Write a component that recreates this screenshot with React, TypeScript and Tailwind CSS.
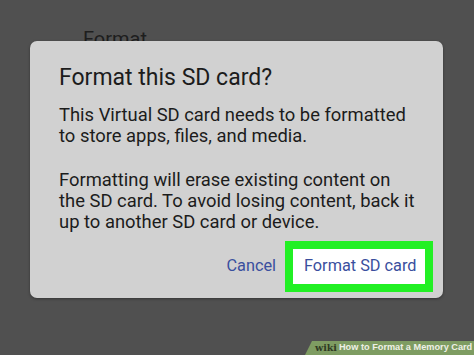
import React from 'react';

export default function App() {
  return (
    <div
      className="relative w-[474px] h-[355px] overflow-hidden bg-[#505050]"
      style={{ fontFamily: 'Roboto, "Liberation Sans", sans-serif' }}
    >
      {/* settings screen dimmed behind the dialog */}
      <div className="pl-[83px] pt-[27px] text-[20px] leading-[24px] text-[#1e1e1e]">Format</div>

      {/* dialog */}
      <div className="absolute left-[30px] top-[41px] w-[413px] h-[257px] rounded-[7px] bg-[#d1d1d1] shadow-[0_1px_3px_rgba(0,0,0,0.35)] flex flex-col">
        <div className="pl-[29px] pr-[10px] pt-[23px] text-[#1c1c1c] whitespace-nowrap">
          <h1 className="text-[23px] leading-[28px] font-normal">Format this SD card?</h1>
          <p className="mt-[12px] text-[18.4px] leading-[21px]">
            This Virtual SD card needs to be formatted
            <br />
            to store apps, files, and media.
          </p>
          <p className="mt-[23px] text-[18.4px] leading-[21px]">
            Formatting will erase existing content on
            <br />
            the SD card. To avoid losing content, back it
            <br />
            up to another SD card or device.
          </p>
        </div>

        <div className="mt-auto mb-[6px] mr-[10px] flex items-center justify-end gap-[9px]">
          <span className="text-[16.3px] text-[#3a4f9e]">Cancel</span>
          <div className="border-[8px] border-[#22f024]">
            <div className="w-[132px] h-[35px] bg-white flex items-center pl-[11px] text-[16.3px] text-[#3a4f9e]">
              Format SD card
            </div>
          </div>
        </div>
      </div>

      {/* wikiHow watermark */}
      <div className="absolute right-0 bottom-0 w-[169px] h-[14px] bg-[#7e9c62] [clip-path:polygon(7px_0,100%_0,100%_100%,0_100%)] flex items-center pl-[10px] gap-[2px] font-bold leading-none whitespace-nowrap">
        <span className="text-[9.5px] text-[#2f3a22]" style={{ fontFamily: '"DejaVu Serif", serif' }}>wiki</span>
        <span className="text-[9.2px] text-[#eef0e6]" style={{ fontFamily: '"Liberation Sans", Arial, sans-serif' }}>How to Format a Memory Card</span>
      </div>
    </div>
  );
}
